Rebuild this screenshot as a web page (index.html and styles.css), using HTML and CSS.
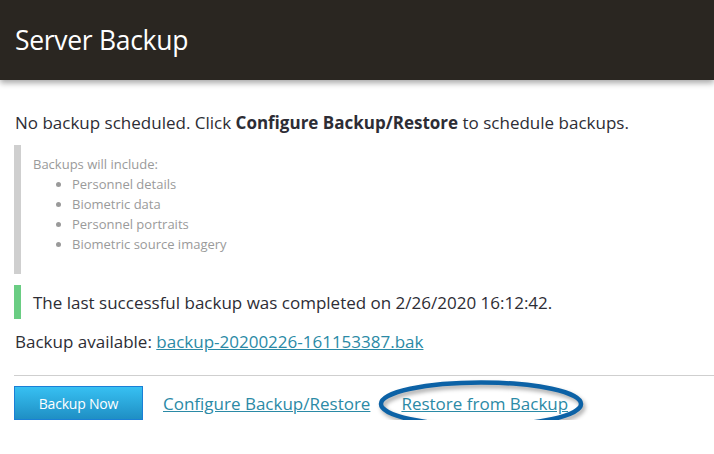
FILE: index.html
```html
<!DOCTYPE html>
<html>
<head>
<meta charset="utf-8">
<link rel="stylesheet" href="styles.css">
</head>
<body>
<header class="topbar"><h1 class="title">Server Backup</h1></header>
<main class="content">
  <p class="intro">No backup scheduled. Click <strong>Configure Backup/Restore</strong> to schedule backups.</p>
  <div class="includes">
    <div class="includes-head">Backups will include:</div>
    <ul class="includes-list">
      <li>Personnel details</li>
      <li>Biometric data</li>
      <li>Personnel portraits</li>
      <li>Biometric source imagery</li>
    </ul>
  </div>
  <div class="success">The last successful backup was completed on 2/26/2020 16:12:42.</div>
  <p class="available">Backup available: <a class="link" href="#">backup-20200226-161153387.bak</a></p>
  <hr class="rule">
  <div class="actions">
    <button class="btn">Backup Now</button>
    <a class="link action-link" href="#">Configure Backup/Restore</a>
    <span class="highlight">
      <a class="link action-link" href="#">Restore from Backup</a>
      <svg class="ring" width="212" height="52" viewBox="0 0 212 52"><ellipse cx="104" cy="24" rx="100" ry="21.5" fill="none" stroke="#0c62a6" stroke-width="4.5"/></svg>
    </span>
  </div>
</main>
</body>
</html>
```
FILE: styles.css
```css
html, body { margin: 0; padding: 0; background: #fff; }
body { font-family: "Open Sans", "Noto Sans", sans-serif; color: #2d2d35; }
.topbar {
  height: 80px;
  background: #2a2621;
  box-shadow: 0 3px 6px rgba(0,0,0,0.35);
  display: flex;
  align-items: center;
}
.title {
  margin: 0 0 0 15px;
  font-size: 26.5px;
  font-weight: 400;
  color: #fff;
  letter-spacing: -0.3px;
}
.content { padding: 0 0 0 14px; display: flex; flex-direction: column; }
.intro { margin: 31px 0 0 1px; font-size: 17px; line-height: 24px; }
.intro strong { font-weight: 700; }
.includes {
  margin-top: 10px;
  height: 129px;
  border-left: 7px solid #cfcfcf;
  padding-left: 12px;
  box-sizing: border-box;
  color: #9a9a9a;
  font-size: 13px;
  padding-top: 9px;
}
.includes-head { line-height: 20px; }
.includes-list { margin: 0; padding-left: 39px; line-height: 20px; }
.success {
  margin-top: 11px;
  height: 34px;
  border-left: 7px solid #6acd83;
  padding-left: 12px;
  box-sizing: border-box;
  display: flex;
  align-items: center;
  font-size: 17px;
}
.available { margin: 11px 0 0 1px; font-size: 17px; line-height: 24px; }
.link { color: #2b8aa6; text-decoration: underline; }
.rule { margin: 21px 0 0 0; border: 0; border-top: 1px solid #cfcfcf; height: 0; }
.actions { display: flex; align-items: center; margin-top: 10px; }
.btn {
  width: 129px;
  height: 34px;
  border: 1px solid #1a7fd6;
  background: linear-gradient(#37c0f2, #1f8fc4);
  color: #fff;
  font-family: "Open Sans", sans-serif;
  font-size: 14px;
  letter-spacing: -0.2px;
  padding: 0;
}
.action-link { font-size: 17px; }
.btn + .action-link { margin-left: 20px; }
.highlight { position: relative; margin-left: 31px; }
.ring {
  position: absolute;
  left: -24px;
  top: -12px;
  filter: drop-shadow(2px 3px 2px rgba(0,0,0,0.35));
  pointer-events: none;
}
```
